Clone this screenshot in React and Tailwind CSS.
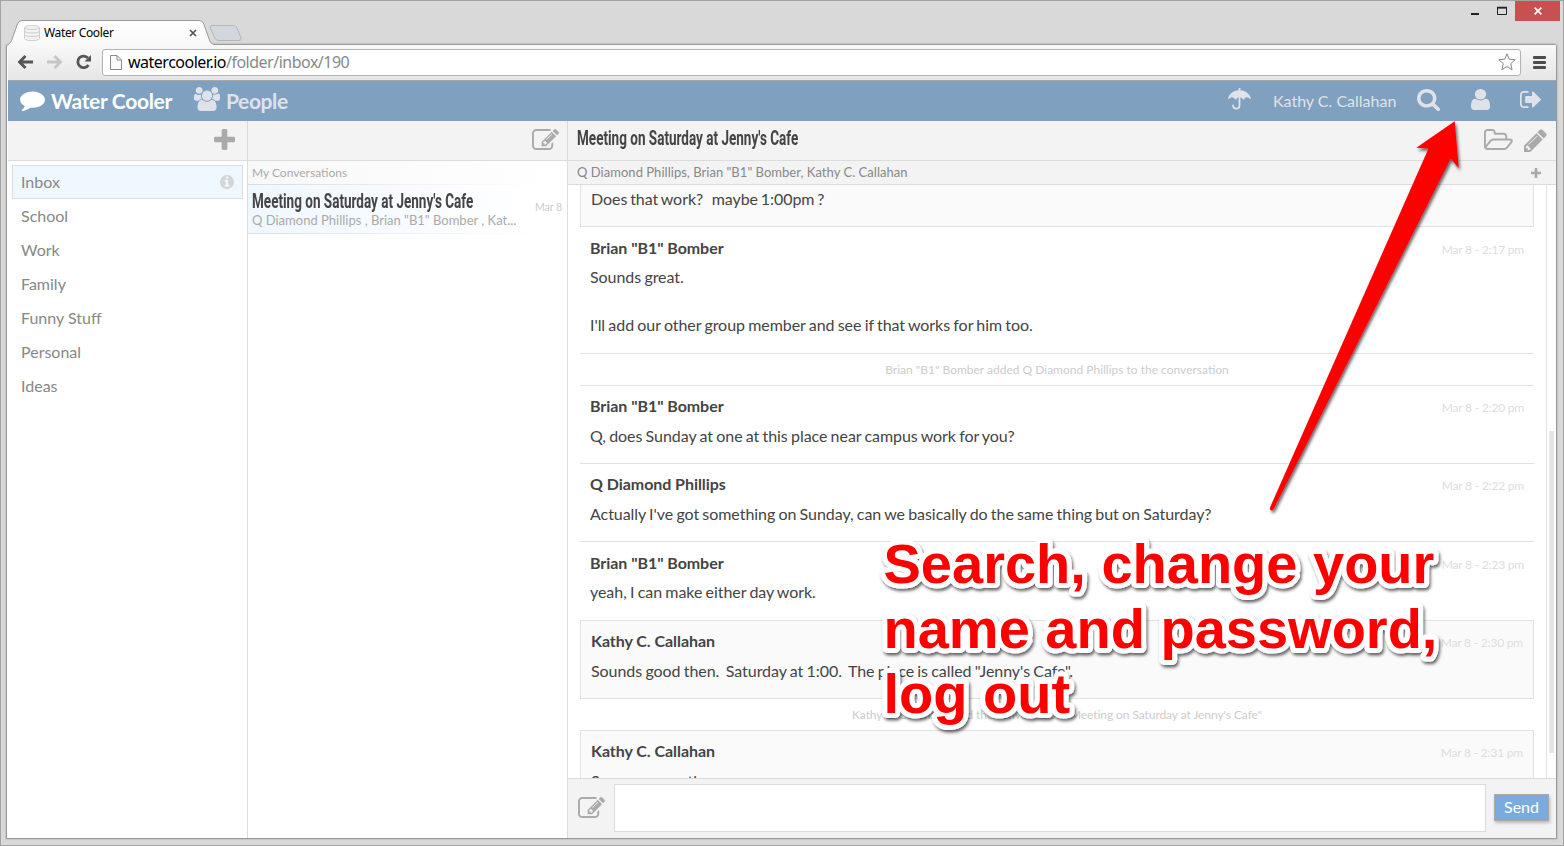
import React from "react";

const GLYPHS = {
  comment: ["0 128 1792 1664", "M1792 896q0 174-120 321.5t-326 233-450 85.5q-70 0-145-8-198 175-460 242-49 14-114 22-17 2-30.5-9t-17.5-29v-1q-3-4-.5-12t2-10 4.5-9.5l6-9 7-8.5 8-9q7-8 31-34.5t34.5-38 31-39.5 32.5-51 27-59 26-76q-157-89-247.5-220t-90.5-281q0-130 71-248.5t191-204.5 286-136.5 348-50.5q244 0 450 85.5t326 233 120 321.5z"],
  group: ["64 0 1920 1792", "M657 896q-162 5-265 128h-134q-82 0-138-40.5t-56-118.5q0-353 124-353 6 0 43.5 21t97.5 42.5 119 21.5q67 0 133-23-5 37-5 66 0 159 93 283zm1071 637q0 120-73 189.5t-194 69.5h-874q-121 0-194-69.5t-73-189.5q0-53 3.5-103.5t14-109 26.5-108.5 43-97.5 62-81 85.5-53.5 111.5-20q10 0 43 21.5t73 48 107 48 135 21.5 135-21.5 107-48 73-48 43-21.5q61 0 111.5 20t85.5 53.5 62 81 43 97.5 26.5 108.5 14 109 3.5 103.5zm-1024-1277q0 106-75 181t-181 75-181-75-75-181 75-181 181-75 181 75 75 181zm704 384q0 159-112.5 271.5t-271.5 112.5-271.5-112.5-112.5-271.5 112.5-271.5 271.5-112.5 271.5 112.5 112.5 271.5zm576 225q0 78-56 118.5t-138 40.5h-134q-103-123-265-128 93-124 93-283 0-29-5-66 66 23 133 23 59 0 119-21.5t97.5-42.5 43.5-21q124 0 124 353zm-128-609q0 106-75 181t-181 75-181-75-75-181 75-181 181-75 181 75 75 181z"],
  umbrella: ["0 0 23 22", "M10.6 0h1.8v2.2C17.600 2.500 21.700 6 22.900 10.400q.2.800-.5.700Q18.400 7.400 15.800 11.400q-.35.400-.7 0Q13.800 9.500 12.400 9.200V17.500a4.100 4.100 0 0 1-8.200 0q0-.9.900-.9t.9.900a2.300 2.300 0 0 0 4.600 0V9.200Q9.200 9.500 7.900 11.400q-.35.400-.7 0Q4.600 7.400.6 11.100q-.7.100-.5-.7C1.300 6 5.400 2.500 10.600 2.200z"],
  search: ["64 128 1664 1664", "M1216 832q0-185-131.5-316.5t-316.5-131.5-316.5 131.5-131.5 316.5 131.5 316.5 316.5 131.5 316.5-131.5 131.5-316.5zm512 832q0 52-38 90t-90 38q-54 0-90-38l-343-342q-179 124-399 124-143 0-273.5-55.5t-225-150-150-225-55.5-273.5 55.5-273.5 150-225 225-150 273.5-55.5 273.5 55.5 225 150 150 225 55.5 273.5q0 220-124 399l343 343q37 37 37 90z"],
  user: ["256 128 1280 1536", "M1536 1399q0 109-62.5 187t-150.5 78h-854q-88 0-150.5-78t-62.5-187q0-85 8.5-160.5t31.5-152 58.5-131 94-89 134.5-34.5q131 128 313 128t313-128q76 0 134.5 34.5t94 89 58.500 131 31.5 152 8.5 160.5zm-256-887q0 159-112.5 271.5t-271.5 112.5-271.5-112.5-112.5-271.5 112.5-271.5 271.5-112.5 271.5 112.5 112.5 271.5z"],
  signOut: ["64 256 1568 1280", "M704 1440q0 4 1 20t.5 26.5-3 23.5-10 19.5-20.5 6.5h-320q-119 0-203.5-84.5t-84.5-203.5v-704q0-119 84.5-203.5t203.5-84.5h320q13 0 22.5 9.5t9.5 22.5q0 4 1 20t.5 26.5-3 23.5-10 19.5-20.5 6.5h-320q-66 0-113 47t-47 113v704q0 66 47 113t113 47h312l11.5 1 11.5 3 8 5.5 7 9 2 13.5zm928-544q0 26-19 45l-544 544q-19 19-45 19t-45-19-19-45v-288h-448q-26 0-45-19t-19-45v-384q0-26 19-45t45-19h448v-288q0-26 19-45t45-19 45 19l544 544q19 19 19 45z"],
  plus: ["192 128 1408 1408", "M1600 736v192q0 40-28 68t-68 28h-416v416q0 40-28 68t-68 28h-192q-40 0-68-28t-28-68v-416h-416q-40 0-68-28t-28-68v-192q0-40 28-68t68-28h416v-416q0-40 28-68t68-28h192q40 0 68 28t28 68v416h416q40 0 68 28t28 68z"],
  info: ["128 128 1536 1536", "M1152 1376v-160q0-14-9-23t-23-9h-96v-512q0-14-9-23t-23-9h-320q-14 0-23 9t-9 23v160q0 14 9 23t23 9h96v320h-96q-14 0-23 9t-9 23v160q0 14 9 23t23 9h448q14 0 23-9t9-23zm-128-896v-160q0-14-9-23t-23-9h-192q-14 0-23 9t-9 23v160q0 14 9 23t23 9h192q14 0 23-9t9-23zm640 416q0 209-103 385.5t-279.5 279.5-385.5 103-385.5-103-279.5-279.5-103-385.5 103-385.5 279.5-279.5 385.5-103 385.5 103 279.5 279.5 103 385.5z"],
  edit: ["0 128 1792 1408", "M888 1184l116-116-152-152-116 116v56h96v96h56zm440-720q-16-16-33 1l-350 350q-17 17-1 33t33-1l350-350q17-17 1-33zm80 594v190q0 119-84.5 203.5t-203.5 84.5h-832q-119 0-203.5-84.5t-84.5-203.5v-832q0-119 84.5-203.5t203.5-84.5h832q63 0 117 25 15 7 18 23 3 17-9 29l-49 49q-14 14-32 8-23-6-45-6h-832q-66 0-113 47t-47 113v832q0 66 47 113t113 47h832q66 0 113-47t47-113v-126q0-13 9-22l64-64q15-15 35-7t20 29zm-96-738l288 288-672 672h-288v-288zm444 132l-92 92-288-288 92-92q28-28 68-28t68 28l152 152q28 28 28 68t-28 68z"],
  folder: ["64 128 1920 1408", "M1845 931q0-35-53-35h-1088q-40 0-85.5 21.5t-71.5 52.5l-294 363q-18 24-18 40 0 35 53 35h1088q40 0 86-22t71-53l294-363q18-22 18-39zm-1141-163h768v-160q0-40-28-68t-68-28h-576q-40 0-68-28t-28-68v-64q0-40-28-68t-68-28h-320q-40 0-68 28t-28 68v853l256-315q44-53 116-87.5t140-34.5zm1269 163q0 62-46 120l-295 363q-43 53-116 87.5t-140 34.5h-1088q-92 0-158-66t-66-158v-960q0-92 66-158t158-66h320q92 0 158 66t66 158v32h544q92 0 158 66t66 158v160h192q54 0 99 24.5t67 70.5q15 32 15 68z"],
  pencil: ["128 128 1536 1536", "M491 1536l91-91-235-235-91 91v107h128v128h107zm523-928q0-22-22-22-10 0-17 7l-542 542q-7 7-7 17 0 22 22 22 10 0 17-7l542-542q7-7 7-17zm-54-192l416 416-832 832h-416v-416zm683 96q0 53-37 90l-166 166-416-416 166-165q36-38 90-38 53 0 91 38l235 234q37 39 37 91z"],
};

function Icon({ name, className }) {
  const [viewBox, d] = GLYPHS[name];
  return (
    <svg viewBox={viewBox} className={"block shrink-0 fill-current " + className} preserveAspectRatio="none">
      <path d={d} />
    </svg>
  );
}

function TitleBar() {
  return (
    <div className="relative z-10 flex h-[43px] shrink-0 justify-between">
      <svg className="absolute -left-px top-[18px] h-[27px] w-[250px]" viewBox="0 19 250 27">
        <defs>
          <linearGradient id="tab" x1="0" y1="0" x2="0" y2="1">
            <stop offset="0" stopColor="#fff" />
            <stop offset="1" stopColor="#f8f8f8" />
          </linearGradient>
        </defs>
        <path d="M7 46V45Q10 44 11.500 40.500L17.500 24Q18.700 20.500 22 20.500H199Q202.500 20.500 203.800 24L209.500 40Q211 44.500 215 44.500V46Z" fill="url(#tab)" />
        <path d="M6.500 46Q8 44.500 9.500 43.500Q10.800 42.500 11.500 40.500L17.500 24Q18.700 20.500 22 20.500H199Q202.500 20.500 203.800 24L209.500 40Q211 44.500 215 44.500" fill="none" stroke="#999" />
        <path d="M212 25.500H233Q236 25.500 237 28L241 38Q241.500 40.500 239 40.500H219Q216 40.500 215 38L210 27.500Q209.500 25.500 212 25.500Z" fill="#d1d6df" stroke="#b3b5b9" />
      </svg>
      <div className="relative mt-[20px] flex h-[24px] w-[205px] items-center self-start pl-[23px]">
        <svg className="h-4 w-4" viewBox="0 0 16 16" fill="#f2f2f2" stroke="#cfcfcf">
          <path d="M.5 2.500V13.500Q1 15.500 8 15.500T15.500 13.500V2.500" />
          <ellipse cx="8" cy="2.500" rx="7.500" ry="2" />
          <path d="M.5 6Q1 8 8 8T15.500 6M.5 9.500Q1 11.500 8 11.500T15.500 9.500" fill="none" />
        </svg>
        <span className="ml-1 font-['Noto_Sans'] text-[12px] leading-4 tracking-[-0.35px] text-black">Water Cooler</span>
        <svg className="ml-auto mr-[9px] h-[8px] w-[8px]" viewBox="0 0 8 8">
          <path d="M1 1L7 7M7 1L1 7" stroke="#555" strokeWidth="1.700" />
        </svg>
      </div>
      <div className="mr-[3px] flex h-5 items-center">
        <svg className="mr-[8px] h-5 w-[37px]" viewBox="0 0 37 20">
          <path d="M1 12h8v2H1z" fill="#222" />
          <path d="M27.500 7h9v6.500h-9z" fill="none" stroke="#222" />
          <path d="M27 6.500h10" stroke="#222" strokeWidth="1.500" />
        </svg>
        <div className="flex h-5 w-[45px] items-center justify-center bg-[#c75050]">
          <svg className="h-[8px] w-[8px]" viewBox="0 0 8 8">
            <path d="M.6.6L7.400 7.400M7.400.6L.6 7.400" stroke="#fff" strokeWidth="1.700" />
          </svg>
        </div>
      </div>
    </div>
  );
}

function Toolbar() {
  return (
    <div className="flex h-[36px] shrink-0 items-center border-b border-[#a5a7a8] bg-linear-to-b from-[#f8f8f8] to-[#e6e6e6] pb-px pl-[10px]">
      <svg className="h-[16px] w-[74px]" viewBox="18 54 74 16" fill="none">
        <path d="M33 62H20M25.500 56L19.500 62L25.500 68" stroke="#555" strokeWidth="2.800" />
        <path d="M47 62H60M54.500 56L60.500 62L54.500 68" stroke="#c6c6c6" strokeWidth="2.800" />
        <path d="M88.500 65A5.800 5.800 0 1 1 88 58" stroke="#555" strokeWidth="2.800" />
        <path d="M91 55V61.500H84.500Z" fill="#555" />
      </svg>
      <div className="ml-[10px] flex h-[27px] w-[1419px] items-center rounded-[3px] border border-[#b2b2b2] bg-white pl-[7px] pr-[4px]">
        <svg className="h-[15px] w-[12px]" viewBox="0 0 12 15" fill="#fafafa" stroke="#8b8b8b">
          <path d="M.5.5H7L11.500 5V14.500H.5ZM7 .5V5H11.500" />
        </svg>
        <span className="ml-[6px] font-['Noto_Sans'] text-[16px] leading-6 tracking-[-0.5px] text-[#888]">
          <span className="text-black">watercooler.io</span>/folder/inbox/190
        </span>
        <svg className="ml-auto h-[18px] w-[18px]" viewBox="0 0 18 18" fill="#fff" stroke="#858585" strokeLinejoin="round">
          <path d="M9 .8L11.300 6.200L17.200 6.700L12.700 10.600L14.100 16.700L9 13.500L3.900 16.700L5.300 10.600L.8 6.700L6.700 6.200Z" />
        </svg>
      </div>
      <div className="ml-[12px] flex w-[13px] flex-col gap-[2px]">
        <div className="h-[3px] rounded-[1px] bg-[#4d4d4d]" />
        <div className="h-[3px] rounded-[1px] bg-[#4d4d4d]" />
        <div className="h-[3px] rounded-[1px] bg-[#4d4d4d]" />
      </div>
    </div>
  );
}

function AppHeader() {
  return (
    <header className="flex h-10 shrink-0 items-center bg-[#80a0c0] pl-3 pr-[14px] text-[#dfe3e9]">
      <Icon name="comment" className="mb-[1px] h-[21px] w-[25px] text-white" />
      <span className="ml-[6px] w-[143px] text-[21px] font-bold leading-10 tracking-[-0.32px] text-white">Water Cooler</span>
      <Icon name="group" className="mb-[4px] h-[24px] w-[26px]" />
      <span className="ml-[6px] text-[21px] font-bold leading-10 tracking-[-0.4px]">People</span>
      <div className="ml-auto flex items-center">
        <Icon name="umbrella" className="mb-[4px] h-[22px] w-[23px]" />
        <span className="ml-[22px] w-[144px] whitespace-nowrap text-[16px] leading-10">Kathy C. Callahan</span>
        <Icon name="search" className="mb-[2px] h-[22px] w-[23px]" />
        <Icon name="user" className="mb-[3px] ml-[31px] h-[21px] w-[19px]" />
        <Icon name="signOut" className="mb-[3px] ml-[30px] mr-px h-[17px] w-[21px]" />
      </div>
    </header>
  );
}

const FOLDERS = ["School", "Work", "Family", "Funny Stuff", "Personal", "Ideas"];

function Folders() {
  return (
    <nav className="flex w-[240px] shrink-0 flex-col border-r border-[#dcdcdc]">
      <div className="flex h-10 items-center justify-end border-b border-[#dcdcdc] bg-[#f3f3f3] pr-[12px]">
        <Icon name="plus" className="mb-[3px] h-[21px] w-[21px] text-[#aaa]" />
      </div>
      <div className="p-1 text-[16px] text-[#888]">
        <div className="flex h-[34px] items-center border border-[#d8e0e6] bg-[#eff7ff] pl-2 pr-2">
          Inbox
          <Icon name="info" className="ml-auto h-[14px] w-[14px] text-[#d5d5d5]" />
        </div>
        {FOLDERS.map((f) => (
          <div key={f} className="flex h-[34px] items-center pl-[9px]">{f}</div>
        ))}
      </div>
    </nav>
  );
}

function Title() {
  return (
    <div className="origin-left scale-x-[0.676] whitespace-nowrap font-['Roboto'] text-[20px] font-bold leading-6 text-[#444]">
      Meeting on Saturday at Jenny's Cafe
    </div>
  );
}

function Conversations() {
  return (
    <section className="flex w-[320px] shrink-0 flex-col border-r border-[#dcdcdc]">
      <div className="flex h-10 items-center justify-end border-b border-[#dcdcdc] bg-[#f3f3f3] pr-[8px]">
        <Icon name="edit" className="mb-[3px] h-[21px] w-[27px] text-[#aaa]" />
      </div>
      <div className="h-6 bg-linear-to-r from-[#dcdcdc] to-white to-90% pb-px">
        <div className="h-[23px] bg-linear-to-r from-[#f8f8f8] to-white pl-1 text-[12px] leading-[24px] text-[#aaa]">My Conversations</div>
      </div>
      <div className="h-[49px] bg-linear-to-r from-[#d8e0e6] to-white to-90% pb-px">
        <div className="flex h-12 items-center bg-linear-to-r from-[#eff7ff] to-white to-90% pl-1 pr-[5px]">
          <div className="w-[283px] shrink-0 overflow-hidden">
            <Title />
            <div className="mt-[-1px] whitespace-nowrap text-[13px] leading-[17px] text-[#aaa]">Q Diamond Phillips , Brian "B1" Bomber , Kat...</div>
          </div>
          <span className="mt-[-3px] whitespace-nowrap text-[10.500px] text-[#ccc]">Mar 8</span>
        </div>
      </div>
    </section>
  );
}

function Message({ author, time, lines, card, tight, className }) {
  return (
    <div className={"shrink-0 px-[10px] " + (card ? "border border-[#e2e2e2] bg-[#fafafa] " : "border-[#e2e2e2] ") + className}>
      <div className="flex h-6 items-center justify-between leading-6">
        <span className="font-bold tracking-[-0.05px]">{author}</span>
        <span className="mt-[3px] text-[12px] tracking-[-0.2px] text-[#ddd]">{time}</span>
      </div>
      <div className={"whitespace-pre leading-6 tracking-[-0.05px] [word-spacing:-0.8px] " + (tight ? "mt-[5px]" : "mt-[6px]")}>
        {lines.map((l, i) => (
          <div key={i} className="h-6">{l}</div>
        ))}
      </div>
    </div>
  );
}

function Notice({ children, className }) {
  return <div className={"shrink-0 text-center text-[12px] text-[#ccc] " + className}>{children}</div>;
}

function Thread() {
  return (
    <main className="flex min-w-0 flex-1 flex-col">
      <div className="flex h-10 shrink-0 items-center border-b border-[#dcdcdc] bg-[#f3f3f3] pl-[9px] pr-[9px]">
        <div className="w-[300px] pb-[5px]">
          <Title />
        </div>
        <Icon name="folder" className="mb-[3px] ml-auto h-[21px] w-[29px] text-[#aaa]" />
        <Icon name="pencil" className="mb-px ml-[11px] h-[23px] w-[23px] text-[#aaa]" />
      </div>
      <div className="flex h-6 shrink-0 items-center justify-between border-b border-[#dcdcdc] bg-[#f3f3f3] pl-[9px] pr-[15px] text-[13px] text-[#888]">
        <span className="tracking-[0.03px]">Q Diamond Phillips, Brian "B1" Bomber, Kathy C. Callahan</span>
        <Icon name="plus" className="h-[10px] w-[10px] text-[#aaa]" />
      </div>
      <div className="flex min-h-0 flex-1">
        <div className="flex min-w-0 flex-1 flex-col overflow-hidden border-r border-[#e2e2e2] pl-3 pr-3 text-[16px] text-[#444]">
          <div className="h-[42px] shrink-0 whitespace-pre border border-t-0 border-[#e2e2e2] bg-[#fafafa] px-[10px] pt-[2px] leading-6 tracking-[-0.05px] [word-spacing:-1.200px]">
            Does that work?   maybe 1:00pm ?
          </div>
          <Message tight author={'Brian "B1" Bomber'} time="Mar 8 - 2:17 pm" className="h-[126px] pt-[9px]" lines={["Sounds great.", "", "I'll add our other group member and see if that works for him too."]} />
          <Notice className="h-[32px] border-t border-[#e2e2e2] leading-[32px]">Brian "B1" Bomber added Q Diamond Phillips to the conversation</Notice>
          <Message author={'Brian "B1" Bomber'} time="Mar 8 - 2:20 pm" className="h-[78px] border-t pt-[8px]" lines={["Q, does Sunday at one at this place near campus work for you?"]} />
          <Message author="Q Diamond Phillips" time="Mar 8 - 2:22 pm" className="h-[78px] border-t pt-[8px]" lines={["Actually I've got something on Sunday, can we basically do the same thing but on Saturday?"]} />
          <Message tight author={'Brian "B1" Bomber'} time="Mar 8 - 2:23 pm" className="h-[79px] border-t pt-[9px]" lines={["yeah, I can make either day work."]} />
          <Message card author="Kathy C. Callahan" time="Mar 8 - 2:30 pm" className="h-[79px] pt-[8px]" lines={["Sounds good then.  Saturday at 1:00.  The place is called \"Jenny's Cafe\"."]} />
          <Notice className="h-[31px] leading-[32px] tracking-[-0.08px]">Kathy C. Callahan titled the conversation "Meeting on Saturday at Jenny's Cafe"</Notice>
          <Message card author="Kathy C. Callahan" time="Mar 8 - 2:31 pm" className="h-[79px] pt-[8px]" lines={["See everyone there."]} />
        </div>
        <div className="flex w-[9px] flex-col items-center bg-white pt-[246px]">
          <div className="h-[322px] w-[5px] bg-[#e5e5e5]" />
        </div>
      </div>
      <div className="flex h-[60px] shrink-0 items-center border-t border-[#dcdcdc] bg-[#f3f3f3] pl-[10px] pr-[7px]">
        <Icon name="edit" className="mb-[2px] h-[21px] w-[27px] text-[#aaa]" />
        <div className="mb-[1px] ml-[9px] h-12 flex-1 border border-[#dcdcdc] bg-white" />
        <button className="mb-[3px] ml-2 h-[27px] w-[55px] border border-[#a9a9a9] bg-[#79abde] text-[16px] leading-[24px] text-white shadow-[1px_2px_3px_rgba(0,0,0,0.25)]">Send</button>
      </div>
    </main>
  );
}

function Annotation() {
  return (
    <svg className="pointer-events-none absolute -left-px -top-px z-20 h-[846px] w-[1564px]" viewBox="0 0 1564 846">
      <defs>
        <filter id="soft" x="-5%" y="-5%" width="110%" height="115%">
          <feDropShadow dx="1.500" dy="2.500" stdDeviation="1.500" floodColor="#000" floodOpacity="0.6" />
        </filter>
      </defs>
      <path filter="url(#soft)" fill="#f00" d="M1454.700 121.300L1416.300 147.800L1428.500 148.500L1270 507.500Q1269.500 510.500 1271.500 510.500Q1273 510.500 1274 508.500L1450.800 158.500L1458.700 168.300Z" />
      <g
        filter="url(#soft)"
        className="font-['Liberation_Sans'] text-[56px] font-bold [paint-order:stroke]"
        fill="#f00"
        stroke="#fff"
        strokeWidth="10"
        strokeLinejoin="round"
      >
        <text x="883.500" y="583">Search, change your</text>
        <text x="883.500" y="648">name and password,</text>
        <text x="883.500" y="713">log out</text>
      </g>
    </svg>
  );
}

export default function App() {
  return (
    <div className="relative flex h-[846px] w-[1564px] flex-col overflow-hidden border border-[#a3a3a3] bg-[#d9d9d9] font-['Lato',sans-serif]">
      <TitleBar />
      <div className="ml-[5px] mr-[6px] flex h-[795px] shrink-0 flex-col rounded-t-[3px] border border-[#999] bg-white shadow-[0_0_2px_rgba(0,0,0,0.3)]">
        <div className="flex min-h-0 flex-1 flex-col pl-px">
          <Toolbar />
          <AppHeader />
          <div className="flex min-h-0 flex-1">
            <Folders />
            <Conversations />
            <Thread />
          </div>
        </div>
      </div>
      <Annotation />
    </div>
  );
}
